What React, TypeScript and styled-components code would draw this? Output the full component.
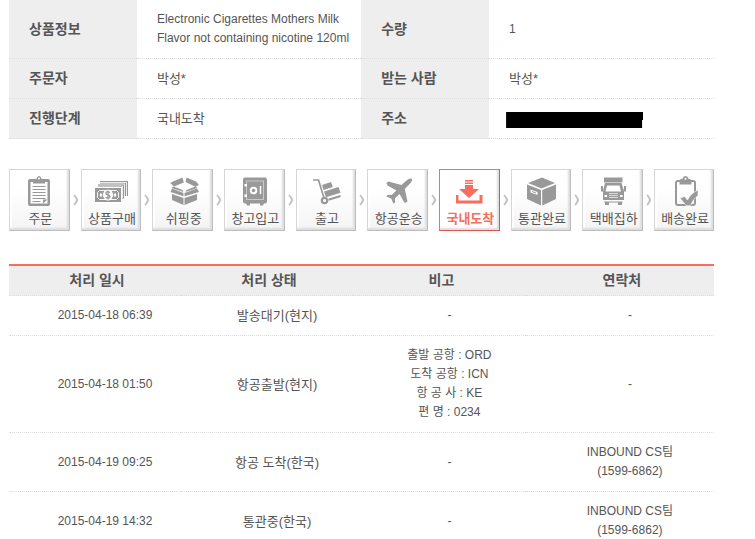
import React from "react";
import styled, { createGlobalStyle } from "styled-components";

const Global = createGlobalStyle`
  *, *::before, *::after { box-sizing: border-box; }
  body {
    margin: 0;
    background: #fff;
    color: #555;
    font-family: "Liberation Sans", "Noto Sans CJK KR", sans-serif;
    font-size: 13px;
    line-height: 19px;
  }
`;

const Page = styled.main`
  padding: 0 41px 0 9px;
`;

const Table = styled.table`
  width: 100%;
  table-layout: fixed;
  border-collapse: separate;
  border-spacing: 0;
`;

const InfoLabel = styled.th`
  padding: 10px 0 10px 20px;
  border-bottom: 1px dotted #ddd;
  background: #eee;
  font-size: 14px;
  text-align: left;
`;

const InfoValue = styled.td<{ $compact?: boolean }>`
  padding: 10px 0 10px 20px;
  border-bottom: 1px dotted #ddd;
  font-size: ${(p) => (p.$compact ? 12 : 13)}px;
`;

const Redacted = styled.span`
  display: block;
  width: 137px;
  height: 16px;
  margin: 3px 0 0 -3px;
  background: #000;
  clip-path: polygon(0 0, 137px 0, 137px 8px, 136px 8px, 136px 16px, 0 16px);
`;

const Steps = styled.ol`
  display: flex;
  align-items: center;
  margin: 30px 0 33px;
  padding: 0;
  list-style: none;
`;

const StepItem = styled.li`
  display: flex;
  flex: 1 1 0;
  align-items: center;

  &:last-child {
    flex: 0 1 60px;
  }
`;

const StepBox = styled.div<{ $active?: boolean }>`
  display: flex;
  flex: 1;
  min-width: 0;
  height: 62px;
  flex-direction: column;
  align-items: center;
  padding-top: 6px;
  border: 1px solid ${(p) => (p.$active ? "#f76d5e" : "#d6d6d6")};
  border-right-color: ${(p) => (p.$active ? "#e0554b" : "#bdbdbd")};
  border-bottom-color: ${(p) => (p.$active ? "#e0554b" : "#bdbdbd")};
  background: ${(p) => (p.$active ? "#fff" : "linear-gradient(#fff 30%, #f4f4f4)")};
  box-shadow: inset -2px -2px 2px #ddd, inset 2px 2px 0 #fff;
  color: ${(p) => (p.$active ? "#f76d5e" : "#555")};
  font-weight: ${(p) => (p.$active ? 700 : 400)};
  white-space: nowrap;
`;

const StepIcon = styled.svg<{ $active?: boolean }>`
  display: block;
  width: 36px;
  height: 30px;
  flex: none;
  margin-bottom: 3px;
  color: ${(p) => (p.$active ? "#f76d5e" : "#999")};
`;

const StepName = styled.span`
  padding-left: 2px;
`;

const Chevron = styled.svg`
  width: 11px;
  height: 12px;
  flex: none;
`;

const HistoryTable = styled(Table)`
  border-top: 2px solid #f76d5e;
`;

const HistoryHead = styled.th`
  padding: 5px 0 5px 4px;
  border-bottom: 1px dotted #ddd;
  background: #eee;
  font-size: 14px;
`;

const HistoryCell = styled.td<{ $compact?: boolean }>`
  padding: 10px 0 10px 20px;
  border-bottom: 1px dotted #ddd;
  font-size: ${(p) => (p.$compact ? 12 : 13)}px;
  text-align: center;
`;

const Line = styled.div``;

const icons: Record<string, React.ReactNode> = {
  order: (
    <>
      <rect x="7" y="3" width="22" height="27" rx="2" fill="currentColor" />
      <rect x="9.500" y="6" width="17" height="21.500" fill="#fff" />
      <path d="M12 7.500V5q0-2 3.500-2.300Q16 0 18 0t2.500 2.700Q24 3 24 5v2.500z" fill="currentColor" />
      <circle cx="18" cy="2.500" r="1" fill="#fff" />
      <path d="M11.500 10.500h13M11.500 13.500h13M11.500 16.500h13M11.500 19.500h13M11.500 22.500h13M11.500 25.500h8" stroke="currentColor" />
      <path d="M22 27.500v-4h4.500z" fill="currentColor" />
    </>
  ),
  purchase: (
    <>
      <rect x="7" y="5" width="28" height="15" fill="currentColor" />
      <path d="M7 6.500h26.500V20" fill="none" stroke="#fff" strokeWidth=".8" />
      <rect x="4.500" y="8" width="27" height="15" fill="currentColor" stroke="#fff" strokeWidth=".8" />
      <path d="M5 10h24.500v12" fill="none" stroke="#fff" strokeWidth=".8" />
      <rect x="1.500" y="11.500" width="27" height="15" fill="currentColor" stroke="#fff" />
      <path d="M6.500 14.500h17l2 2v5l-2 2h-17l-2-2v-5z" fill="none" stroke="#fff" strokeWidth=".9" />
      <ellipse cx="15" cy="19" rx="5" ry="5.500" fill="#fff" />
      <path d="M8 16.800l1.600 2.200L8 21.200 6.400 19zM22 16.800l1.600 2.200-1.600 2.200-1.600-2.200z" fill="#fff" />
      <path d="M17 17q-.5-1.300-2-1.300-2 0-2 1.600 0 1.300 2 1.700t2 1.800q0 1.500-2 1.500-1.700 0-2.200-1.300M15 14.500v9" fill="none" stroke="currentColor" strokeWidth="1.300" />
    </>
  ),
  shipping: (
    <g fill="currentColor">
      <path d="M8 5.500L17.500 1.500l1.300 5L9 10.500 5.200 7z" />
      <path d="M21.500 1.500L31 5.500 34 9l-3.500 1.800-10-4.800z" />
      <path d="M7 12.500l11.500 4.500v3.200L5.500 16z" />
      <path d="M32 12.500L19.500 17v3.200L34 16z" />
      <path d="M7 18l11.500 4v7L7 24z" />
      <path d="M32 18l-12.500 4v7L32 24z" />
      <path d="M6.500 12l2-1.500 9 3.500 1 2zM32.500 12l-2-1.500-9 3.500-1 2z" />
    </g>
  ),
  warehouse: (
    <>
      <path d="M10 27h4v2.500h-3zM24 27h4l-1 2.500h-3z" fill="currentColor" />
      <rect x="7" y="1.500" width="24" height="26" rx="2" fill="currentColor" />
      <rect x="10.500" y="5" width="17" height="18.500" fill="none" stroke="#c8c8c8" />
      <circle cx="17.500" cy="14.500" r="2.800" fill="#999" stroke="#fff" strokeWidth="2" />
      <path d="M24.500 10v8" stroke="#fff" strokeWidth="1.500" />
      <path d="M8.500 8h2.500v2.500H8.500zM8.500 18.500h2.500V21H8.500z" fill="#fff" />
    </>
  ),
  release: (
    <>
      <path d="M5 4h5.500l5.500 18" fill="none" stroke="currentColor" strokeWidth="1.700" />
      <path d="M14 9l9-3 1.800 5-9.200 3z" fill="currentColor" />
      <path d="M16 15.500l14.500-4.500 2 5.800-14.500 4.500z" fill="currentColor" />
      <path d="M20.500 23.800L32.500 20" stroke="currentColor" strokeWidth="2" />
      <circle cx="16.500" cy="24.500" r="2.700" fill="#fff" stroke="currentColor" strokeWidth="2.200" />
    </>
  ),
  air: (
    <path d="M31.800 2.800q1 2-2 5l-5 5.200 2.700 12.500L24.700 27 19.500 18l-4.700 4.500.4 4-1.800 1-2.200-5-4.700-2 1.200-1.700 4 .2 4.700-4.500L7.500 9.500l-1-2.500 1.700-1.500 13.300 3.500L26.500 4.500q3.300-2.700 5.300-1.700z" fill="currentColor" />
  ),
  arrived: (
    <g fill="currentColor">
      <path d="M14 4h8v1.500h-8zM14 6.500h8V8h-8z" />
      <path d="M14 9h8v4h6L18 22 8 13h6z" />
      <path d="M5 19h2.500v5.500h21V19H31.500v8.500H5z" />
    </g>
  ),
  customs: (
    <>
      <path d="M19 1.500l13 5.500-13.500 5.500L5 7z" fill="currentColor" />
      <path d="M4 8.500L18 14v15.500L4 23zM33 8.500L19.200 14v15.500L33 23z" fill="currentColor" />
      <path d="M7.500 13.500l7 2.500v3l-7-2.500z" fill="#fff" />
      <path d="M9 15.500l4 1.500" stroke="#999" />
    </>
  ),
  pickup: (
    <>
      <path d="M9 1.500h18.500v5H9z" fill="currentColor" />
      <path d="M10 7h16.500l2.500 8v9H8v-9z" fill="currentColor" />
      <path d="M12 9.500h12.500l1.500 6H10.500z" fill="#fff" />
      <path d="M6 10v5.500h2V10zM29 10v5.500h2V10z" fill="currentColor" />
      <path d="M14 17.500h9M14 19.500h9M14 21.500h9" stroke="#ddd" />
      <path d="M9.500 20h2.500M25 20h2.500" stroke="#fff" strokeWidth="2" />
      <path d="M9 26h18.500" stroke="currentColor" />
      <path d="M10 26h4v3h-4zM23 26h4v3h-4z" fill="currentColor" />
    </>
  ),
  delivered: (
    <>
      <rect x="10" y="5" width="19" height="24" rx="2" fill="none" stroke="currentColor" strokeWidth="2" />
      <path d="M13.500 8.500V5q0-2 3-2.300Q17 0 19.500 0t3 2.700q3 .3 3 2.300v3.500z" fill="currentColor" />
      <circle cx="19.500" cy="2.700" r="1" fill="#fff" />
      <path d="M14 22l4.500-1.500 3 3.500q3-6.500 10.500-10v5.500q-5 3.500-7.500 10H20z" fill="currentColor" stroke="#fff" strokeWidth=".6" />
    </>
  ),
};

const steps = [
  { icon: "order", name: "주문" },
  { icon: "purchase", name: "상품구매" },
  { icon: "shipping", name: "쉬핑중" },
  { icon: "warehouse", name: "창고입고" },
  { icon: "release", name: "출고" },
  { icon: "air", name: "항공운송" },
  { icon: "arrived", name: "국내도착", active: true },
  { icon: "customs", name: "통관완료" },
  { icon: "pickup", name: "택배집하" },
  { icon: "delivered", name: "배송완료" },
];

const contact = ["INBOUND CS팀", "(1599-6862)"];

const history = [
  { date: "2015-04-18 06:39", status: "발송대기(현지)", note: ["-"], contact: ["-"] },
  {
    date: "2015-04-18 01:50",
    status: "항공출발(현지)",
    note: ["출발 공항 : ORD", "도착 공항 : ICN", "항 공 사 : KE", "편 명 : 0234"],
    contact: ["-"],
  },
  { date: "2015-04-19 09:25", status: "항공 도착(한국)", note: ["-"], contact },
  { date: "2015-04-19 14:32", status: "통관중(한국)", note: ["-"], contact },
];

function Lines({ items }: { items: string[] }) {
  return (
    <>
      {items.map((item) => (
        <Line key={item}>{item}</Line>
      ))}
    </>
  );
}

export default function App() {
  return (
    <Page>
      <Global />
      <Table>
        <colgroup>
          <col width="18.150%" />
          <col width="31.800%" />
          <col width="18.150%" />
          <col />
        </colgroup>
        <tbody>
          <tr>
            <InfoLabel scope="row">상품정보</InfoLabel>
            <InfoValue $compact>
              Electronic Cigarettes Mothers Milk Flavor not containing nicotine 120ml
            </InfoValue>
            <InfoLabel scope="row">수량</InfoLabel>
            <InfoValue $compact>1</InfoValue>
          </tr>
          <tr>
            <InfoLabel scope="row">주문자</InfoLabel>
            <InfoValue>박성*</InfoValue>
            <InfoLabel scope="row">받는 사람</InfoLabel>
            <InfoValue>박성*</InfoValue>
          </tr>
          <tr>
            <InfoLabel scope="row">진행단계</InfoLabel>
            <InfoValue>국내도착</InfoValue>
            <InfoLabel scope="row">주소</InfoLabel>
            <InfoValue>
              <Redacted />
            </InfoValue>
          </tr>
        </tbody>
      </Table>

      <Steps>
        {steps.map((step, i) => (
          <StepItem key={step.icon} aria-current={step.active ? "step" : undefined}>
            <StepBox $active={step.active}>
              <StepIcon $active={step.active} viewBox="0 0 36 30" aria-hidden="true">
                {icons[step.icon]}
              </StepIcon>
              <StepName>{step.name}</StepName>
            </StepBox>
            {i < steps.length - 1 && (
              <Chevron viewBox="0 0 11 12" aria-hidden="true">
                <path d="M4 1q1.500 1 3.200 5Q5.500 10 4 11" fill="none" stroke="#c4c4c4" strokeWidth="2" />
              </Chevron>
            )}
          </StepItem>
        ))}
      </Steps>

      <HistoryTable>
        <colgroup>
          <col width="24.400%" />
          <col width="24.400%" />
          <col width="24.500%" />
          <col />
        </colgroup>
        <thead>
          <tr>
            <HistoryHead scope="col">처리 일시</HistoryHead>
            <HistoryHead scope="col">처리 상태</HistoryHead>
            <HistoryHead scope="col">비고</HistoryHead>
            <HistoryHead scope="col">연락처</HistoryHead>
          </tr>
        </thead>
        <tbody>
          {history.map((row) => (
            <tr key={row.date}>
              <HistoryCell $compact>{row.date}</HistoryCell>
              <HistoryCell>{row.status}</HistoryCell>
              <HistoryCell $compact>
                <Lines items={row.note} />
              </HistoryCell>
              <HistoryCell $compact>
                <Lines items={row.contact} />
              </HistoryCell>
            </tr>
          ))}
        </tbody>
      </HistoryTable>
    </Page>
  );
}
